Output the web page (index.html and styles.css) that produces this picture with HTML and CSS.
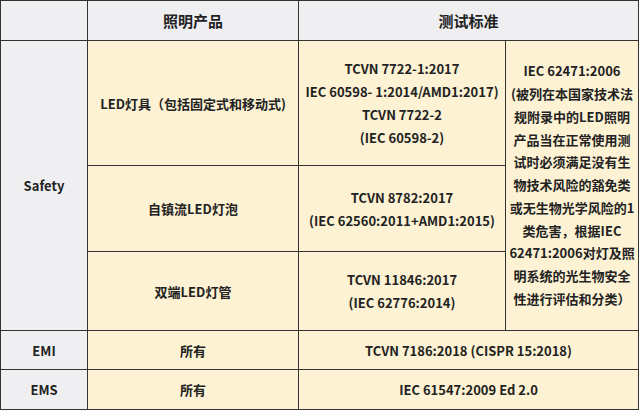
FILE: index.html
```html
<!DOCTYPE html>
<html lang="zh">
<head>
<meta charset="utf-8">
<link rel="stylesheet" href="styles.css">
</head>
<body>
<table class="std">
  <colgroup>
    <col class="c1"><col class="c2"><col class="c3"><col class="c4">
  </colgroup>
  <tr class="r-head">
    <th class="gray"></th>
    <th class="gray">照明产品</th>
    <th class="gray" colspan="2">测试标准</th>
  </tr>
  <tr class="r1">
    <td class="gray" rowspan="3">Safety</td>
    <td>LED灯具（包括固定式和移动式)</td>
    <td>TCVN 7722-1:2017<br>IEC 60598- 1:2014/AMD1:2017)<br>TCVN 7722-2<br>(IEC 60598-2)</td>
    <td rowspan="3" class="note">IEC 62471:2006<br>(被列在本国家技术法<br>规附录中的LED照明<br>产品当在正常使用测<br>试时必须满足没有生<br>物技术风险的豁免类<br>或无生物光学风险的1<br>类危害，根据IEC<br>62471:2006对灯及照<br>明系统的光生物安全<br>性进行评估和分类）</td>
  </tr>
  <tr class="r2">
    <td>自镇流LED灯泡</td>
    <td>TCVN 8782:2017<br>(IEC 62560:2011+AMD1:2015)</td>
  </tr>
  <tr class="r3">
    <td>双端LED灯管</td>
    <td>TCVN 11846:2017<br>(IEC 62776:2014)</td>
  </tr>
  <tr class="r-emi">
    <td class="gray">EMI</td>
    <td>所有</td>
    <td colspan="2">TCVN 7186:2018 (CISPR 15:2018)</td>
  </tr>
  <tr class="r-ems">
    <td class="gray">EMS</td>
    <td>所有</td>
    <td colspan="2">IEC 61547:2009 Ed 2.0</td>
  </tr>
</table>
</body>
</html>
```
FILE: styles.css
```css
html, body {
  margin: 0;
  padding: 0;
  background: #ffffff;
}
.std {
  border-collapse: collapse;
  table-layout: fixed;
  width: 638px;
  font-family: "Noto Sans CJK SC", "Noto Sans", sans-serif;
  font-weight: 700;
  font-size: 13px;
  line-height: 23px;
  color: #222222;
}
.c1 { width: 87px; }
.c2 { width: 211px; }
.c3 { width: 207px; }
.c4 { width: 133px; }
.std th, .std td {
  border: 1px solid #333333;
  background: #fdf2d3;
  text-align: center;
  vertical-align: middle;
  padding: 0 4px;
  font-weight: 700;
}
.std .gray {
  background: #efeff1;
}
.std th {
  font-size: 15px;
}
.std .note {
  padding: 0 2px;
  white-space: nowrap;
  line-height: 22.8px;
}
.r-head { height: 40px; }
.r1 { height: 125px; }
.r2 { height: 86px; }
.r3 { height: 79px; }
.r-emi { height: 39px; }
.r-ems { height: 40px; }
```
